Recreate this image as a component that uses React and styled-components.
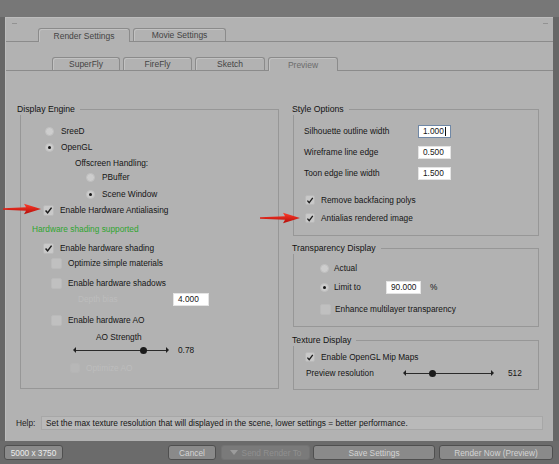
import React from "react";
import styled, { createGlobalStyle } from "styled-components";

const GlobalStyle = createGlobalStyle`
  html, body {
    margin: 0;
    padding: 0;
    background: #6a6a6a;
  }
  body {
    font-family: "Liberation Sans", Arial, sans-serif;
    font-size: 8.3px;
    color: #151515;
  }
`;

const Window = styled.div`
  position: relative;
  width: 559px;
  height: 464px;
  overflow: hidden;
  background: #676767;
  display: flex;
  flex-direction: column;
`;

const TitleStrip = styled.div`
  height: 17px;
  flex-shrink: 0;
  background: #777;
`;

const Panel = styled.div`
  position: relative;
  flex: 1;
  margin: 0 6px 0 5px;
  padding-top: 10px;
  background: #b2b2b2;
  border-top: 1px solid #bdbdbd;
  border-left: 1px solid #bdbdbd;
  display: flex;
  flex-direction: column;

  &::before,
  &::after {
    content: "";
    position: absolute;
    top: 5px;
    width: 5px;
    height: 1px;
    background: #929292;
  }
  &::before {
    left: 6px;
  }
  &::after {
    right: 5px;
  }
`;

const TabBar = styled.div`
  display: flex;
  align-items: flex-end;
  gap: ${p => p.$gap}px;
  height: 13px;
  margin-top: ${p => p.$mt || 0}px;
  padding-left: ${p => p.$indent}px;
  border-bottom: 1px solid #8b8b8b;
  flex-shrink: 0;
`;

const Tab = styled.div`
  width: ${p => p.$w}px;
  box-sizing: border-box;
  border: 1px solid #8b8b8b;
  border-bottom: none;
  border-radius: 3px 3px 0 0;
  background: #b2b2b2;
  box-shadow: inset 1px 1px 0 #c2c2c2;
  display: flex;
  align-items: center;
  justify-content: center;
  font-size: 8.5px;
  color: ${p => (p.$faded ? "#6c6c6c" : "#444")};
  margin-bottom: ${p => (p.$active ? -1 : 0)}px;
  height: ${p => (p.$active ? 14 : 13)}px;
`;

const Columns = styled.div`
  display: flex;
  align-items: flex-start;
  gap: 13px;
  height: 287px;
  margin-top: 32px;
  padding-left: 11px;
  flex-shrink: 0;
`;

const Column = styled.div`
  width: ${p => p.$w}px;
  display: flex;
  flex-direction: column;
`;

const Group = styled.div`
  display: flex;
  flex-direction: column;
  margin-top: ${p => p.$mt || 0}px;
`;

const GroupHead = styled.div`
  display: flex;
  height: 12px;
  align-items: center;
`;

const GroupTitle = styled.span`
  font-size: 8.7px;
  color: #121212;
  padding-right: 5px;
`;

const GroupRule = styled.div`
  flex: 1;
  align-self: stretch;
  margin-top: 6px;
  border-top: 1px solid #979797;
  border-right: 1px solid #979797;
`;

const GroupBody = styled.div`
  margin-left: ${p => p.$inset}px;
  padding-bottom: ${p => p.$pb}px;
  border: 1px solid #979797;
  border-top: none;
  display: flex;
  flex-direction: column;
`;

const Row = styled.div`
  display: flex;
  align-items: center;
  height: ${p => p.$h || 12}px;
  margin-top: ${p => p.$mt || 0}px;
  padding-left: ${p => p.$indent || 0}px;
  flex-shrink: 0;
  white-space: nowrap;
`;

const Text = styled.span`
  color: ${p => (p.$tone === "dim" ? "#bdbdbd" : p.$tone === "ok" ? "#2fa52f" : "#151515")};
  width: ${p => (p.$w ? `${p.$w}px` : "auto")};
  margin-left: ${p => p.$ml || 0}px;
  flex-shrink: 0;
`;

const RadioDot = styled.span`
  width: 9px;
  height: 9px;
  box-sizing: border-box;
  border-radius: 50%;
  background: #cdcdcd;
  border: 1px solid #c0c0c0;
  margin-right: ${p => p.$gap}px;
  display: flex;
  align-items: center;
  justify-content: center;
  flex-shrink: 0;

  &::after {
    content: "";
    width: 3px;
    height: 3px;
    border-radius: 50%;
    background: ${p => (p.$on ? "#151515" : "transparent")};
  }
`;

const CheckBox = styled.span`
  width: ${p => p.$size}px;
  height: ${p => p.$size}px;
  box-sizing: border-box;
  border-radius: 2px;
  background: ${p => (p.$disabled ? "#b7b7b7" : p.$on ? "#c9c9c9" : "#c0c0c0")};
  border: 1px solid ${p => (p.$disabled ? "#b5b5b5" : "#bababa")};
  margin-right: ${p => p.$gap}px;
  display: flex;
  align-items: center;
  justify-content: center;
  flex-shrink: 0;
`;

const NumField = styled.span`
  width: ${p => p.$w}px;
  height: 13px;
  box-sizing: border-box;
  padding-left: 4px;
  background: #fff;
  border: 1px solid ${p => (p.$focus ? "#7088a6" : "#e4e4e4")};
  color: #151515;
  display: flex;
  align-items: center;
  flex-shrink: 0;
`;

const Caret = styled.span`
  width: 1px;
  height: 9px;
  margin-left: 1px;
  background: #111;
`;

const SliderWrap = styled.div`
  width: ${p => p.$w}px;
  height: 9px;
  display: flex;
  align-items: center;
  flex-shrink: 0;
`;

const SliderArrow = styled.span`
  width: 0;
  height: 0;
  border-top: 3px solid transparent;
  border-bottom: 3px solid transparent;
  ${p => (p.$dir === "left" ? "border-right: 3px solid #202020;" : "border-left: 3px solid #202020;")}
`;

const SliderTrack = styled.div`
  position: relative;
  flex: 1;
  height: 1px;
  background: #2a2a2a;
`;

const SliderThumb = styled.span`
  position: absolute;
  top: -3px;
  width: 7px;
  height: 7px;
  margin-left: -3.5px;
  border-radius: 50%;
  background: #1b1b1b;
`;

const HelpRow = styled.div`
  display: flex;
  align-items: center;
  height: 14px;
  margin-top: 26px;
  padding-left: 10px;
`;

const HelpLabel = styled.span`
  width: 25px;
  color: #222;
`;

const HelpField = styled.div`
  width: 502px;
  height: 14px;
  box-sizing: border-box;
  padding-left: 4px;
  background: #b9b9b9;
  border: 1px solid #a7a7a7;
  display: flex;
  align-items: center;
  color: #151515;
  white-space: nowrap;
`;

const Footer = styled.div`
  height: 23px;
  flex-shrink: 0;
  display: flex;
  align-items: center;
  padding: 0 6px 0 4px;
  background: #6b6b6b;
`;

const FootButton = styled.div`
  width: ${p => p.$w}px;
  height: 15px;
  margin-left: ${p => p.$ml || 0}px;
  box-sizing: border-box;
  border: 1px solid ${p => (p.$disabled ? "#737373" : "#4f4f4f")};
  border-radius: 3px;
  background: ${p => (p.$disabled ? "#7a7a7a" : "#8a8a8a")};
  color: ${p => (p.$disabled ? "#909090" : p.$bright ? "#ececec" : "#d4d4d4")};
  font-size: 8.3px;
  display: flex;
  align-items: center;
  justify-content: center;
  gap: 4px;
  flex-shrink: 0;
`;

const Spacer = styled.div`
  flex: 1;
`;

const DropTriangle = styled.span`
  width: 0;
  height: 0;
  border-left: 4px solid transparent;
  border-right: 4px solid transparent;
  border-top: 5px solid #9c9c9c;
`;

const Pointer = styled.svg`
  position: absolute;
  left: ${p => p.$x}px;
  top: ${p => p.$y}px;
  overflow: visible;
`;

const Tick = () => (
  <svg width="9" height="9" viewBox="0 0 9 9">
    <path d="M1.6 4.6 L3.6 6.9 L7.6 1.6" fill="none" stroke="#1a1a1a" strokeWidth="1.5" />
  </svg>
);

const Radio = ({ on, gap = 7, children }) => (
  <>
    <RadioDot $on={on} $gap={gap} />
    <Text>{children}</Text>
  </>
);

const Check = ({ on, size = 11, gap = 6, disabled, children }) => (
  <>
    <CheckBox $on={on} $size={size} $gap={gap} $disabled={disabled}>
      {on && <Tick />}
    </CheckBox>
    <Text $tone={disabled ? "dim" : undefined}>{children}</Text>
  </>
);

const Slider = ({ w, pos }) => (
  <SliderWrap $w={w}>
    <SliderArrow $dir="left" />
    <SliderTrack>
      <SliderThumb style={{ left: `${pos * 100}%` }} />
    </SliderTrack>
    <SliderArrow $dir="right" />
  </SliderWrap>
);

const RedArrow = ({ x, y, w }) => (
  <Pointer $x={x} $y={y} width={w} height="12" viewBox={`0 0 ${w} 12`}>
    <defs>
      <linearGradient id="redfill" x1="0" y1="0" x2="0" y2="1">
        <stop offset="0" stopColor="#ff3b2a" />
        <stop offset="1" stopColor="#b30d08" />
      </linearGradient>
    </defs>
    <polygon
      points={`0,5.3 ${w - 15},4.3 ${w - 17},0.8 ${w},6 ${w - 17},11.2 ${w - 15},7.7 0,6.7`}
      fill="url(#redfill)"
    />
  </Pointer>
);

const Title = ({ children }) => (
  <GroupHead>
    <GroupTitle>{children}</GroupTitle>
    <GroupRule />
  </GroupHead>
);

export default function App() {
  return (
    <>
      <GlobalStyle />
      <Window>
        <TitleStrip />
        <Panel>
          <TabBar $indent={32} $gap={3}>
            <Tab $w={92} $active>Render Settings</Tab>
            <Tab $w={93}>Movie Settings</Tab>
          </TabBar>
          <TabBar $indent={46} $gap={3} $mt={15}>
            <Tab $w={68}>SuperFly</Tab>
            <Tab $w={69}>FireFly</Tab>
            <Tab $w={70}>Sketch</Tab>
            <Tab $w={70} $active $faded>Preview</Tab>
          </TabBar>

          <Columns>
            <Column $w={262}>
              <Group>
                <Title>Display Engine</Title>
                <GroupBody $inset={3} $pb={14}>
                  <Row $mt={10} $indent={24}><Radio>SreeD</Radio></Row>
                  <Row $mt={4} $indent={24}><Radio on>OpenGL</Radio></Row>
                  <Row $mt={4} $indent={54}><Text>Offscreen Handling:</Text></Row>
                  <Row $mt={2} $indent={65}><Radio>PBuffer</Radio></Row>
                  <Row $mt={5} $indent={65}><Radio on>Scene Window</Radio></Row>
                  <Row $mt={4} $indent={22}><Check on>Enable Hardware Antialiasing</Check></Row>
                  <Row $mt={7} $indent={11}><Text $tone="ok">Hardware shading supported</Text></Row>
                  <Row $mt={7} $indent={22}><Check on>Enable hardware shading</Check></Row>
                  <Row $mt={3} $indent={30}><Check>Optimize simple materials</Check></Row>
                  <Row $mt={8} $indent={30}><Check>Enable hardware shadows</Check></Row>
                  <Row $mt={4} $indent={57}>
                    <Text $tone="dim" $w={95}>Depth bias</Text>
                    <NumField $w={36}>4.000</NumField>
                  </Row>
                  <Row $mt={9} $indent={30}><Check>Enable hardware AO</Check></Row>
                  <Row $mt={5} $indent={75}><Text>AO Strength</Text></Row>
                  <Row $mt={1} $indent={52}>
                    <Slider w={96} pos={0.75} />
                    <Text $ml={9}>0.78</Text>
                  </Row>
                  <Row $mt={6} $indent={49}><Check size={10} disabled>Optimize AO</Check></Row>
                </GroupBody>
              </Group>
            </Column>

            <Column $w={247}>
              <Group>
                <Title>Style Options</Title>
                <GroupBody $inset={1} $pb={11}>
                  <Row $h={14} $mt={9} $indent={10}>
                    <Text $w={114}>Silhouette outline width</Text>
                    <NumField $w={33} $focus>1.000<Caret /></NumField>
                  </Row>
                  <Row $h={14} $mt={7} $indent={10}>
                    <Text $w={114}>Wireframe line edge</Text>
                    <NumField $w={33}>0.500</NumField>
                  </Row>
                  <Row $h={14} $mt={7} $indent={10}>
                    <Text $w={114}>Toon edge line width</Text>
                    <NumField $w={33}>1.500</NumField>
                  </Row>
                  <Row $mt={14} $indent={11}><Check on size={10}>Remove backfacing polys</Check></Row>
                  <Row $mt={6} $indent={11}><Check on size={10}>Antialias rendered image</Check></Row>
                </GroupBody>
              </Group>

              <Group $mt={6}>
                <Title>Transparency Display</Title>
                <GroupBody $inset={1} $pb={11}>
                  <Row $h={14} $mt={7} $indent={26}><Radio gap={5}>Actual</Radio></Row>
                  <Row $h={14} $mt={5} $indent={26}>
                    <RadioDot $on $gap={5} />
                    <Text $w={52}>Limit to</Text>
                    <NumField $w={35}>90.000</NumField>
                    <Text $ml={9}>%</Text>
                  </Row>
                  <Row $mt={9} $indent={26}><Check gap={4}>Enhance multilayer transparency</Check></Row>
                </GroupBody>
              </Group>

              <Group $mt={7}>
                <Title>Texture Display</Title>
                <GroupBody $inset={1} $pb={10}>
                  <Row $mt={5} $indent={11}><Check on size={10}>Enable OpenGL Mip Maps</Check></Row>
                  <Row $mt={4} $indent={12}>
                    <Text $w={97}>Preview resolution</Text>
                    <Slider w={91} pos={0.31} />
                    <Text $ml={14}>512</Text>
                  </Row>
                </GroupBody>
              </Group>
            </Column>
          </Columns>

          <HelpRow>
            <HelpLabel>Help:</HelpLabel>
            <HelpField>
              Set the max texture resolution that will displayed in the scene, lower settings = better performance.
            </HelpField>
          </HelpRow>
        </Panel>

        <Footer>
          <FootButton $w={59} $bright>5000 x 3750</FootButton>
          <Spacer />
          <FootButton $w={48}>Cancel</FootButton>
          <FootButton $w={89} $ml={5} $disabled>
            <DropTriangle />
            Send Render To
          </FootButton>
          <FootButton $w={122} $ml={3}>Save Settings</FootButton>
          <FootButton $w={114} $ml={4}>Render Now (Preview)</FootButton>
        </Footer>

        <RedArrow x={3} y={203} w={38} />
        <RedArrow x={260} y={212} w={40} />
      </Window>
    </>
  );
}
